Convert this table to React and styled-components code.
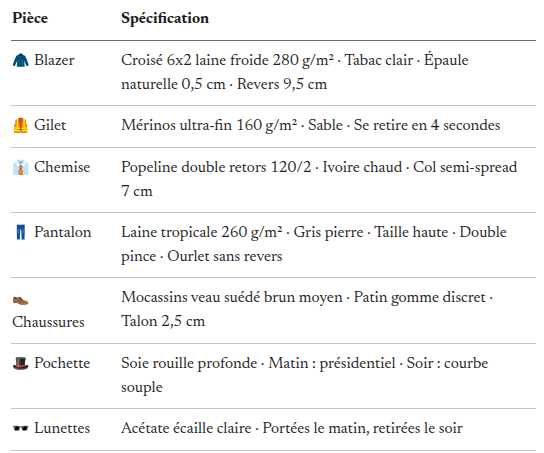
import React from "react";
import styled, { createGlobalStyle } from "styled-components";

const GlobalStyle = createGlobalStyle`
  html, body {
    margin: 0;
    background: #ffffff;
  }
`;

const items = [
  { icon: "🧥", name: "Blazer", spec: "Croisé 6x2 laine froide 280 g/m² · Tabac clair · Épaule naturelle 0,5 cm · Revers 9,5 cm" },
  { icon: "🦺", name: "Gilet", spec: "Mérinos ultra-fin 160 g/m² · Sable · Se retire en 4 secondes" },
  { icon: "👔", name: "Chemise", spec: "Popeline double retors 120/2 · Ivoire chaud · Col semi-spread 7 cm" },
  { icon: "👖", name: "Pantalon", spec: "Laine tropicale 260 g/m² · Gris pierre · Taille haute · Double pince · Ourlet sans revers" },
  { icon: "👞", name: "Chaussures", spec: "Mocassins veau suédé brun moyen · Patin gomme discret · Talon 2,5 cm" },
  { icon: "🎩", name: "Pochette", spec: "Soie rouille profonde · Matin : présidentiel · Soir : courbe souple" },
  { icon: "🕶️", name: "Lunettes", spec: "Acétate écaille claire · Portées le matin, retirées le soir" },
];

const Page = styled.div`
  padding: 8px 8px 0 11px;
`;

const Table = styled.table`
  width: 100%;
  border-collapse: collapse;
  table-layout: fixed;
  font-family: "Newsreader", "Liberation Serif", serif;
  font-size: 16px;
  line-height: 24px;
  color: #1c1c1c;
`;

const HeadCell = styled.th`
  text-align: left;
  font-weight: 700;
  font-size: 15.5px;
  padding: 0 ${(p) => (p.$first ? "20px" : "12px")} 8px 1px;
  border-bottom: 1px solid #6b6b6b;
  width: ${(p) => (p.$first ? "88px" : "auto")};
`;

const Row = styled.tr`
  border-bottom: 1px solid #c4c4c4;
`;

const Cell = styled.td`
  vertical-align: top;
  padding: 8px ${(p) => (p.$first ? "20px" : "12px")} 8px 1px;
`;

const Icon = styled.span`
  display: inline-block;
  width: 17px;
  margin-right: 5px;
  font-size: 14px;
  text-align: center;
`;

export default function App() {
  return (
    <Page>
      <GlobalStyle />
      <Table>
        <thead>
          <tr>
            <HeadCell $first>Pièce</HeadCell>
            <HeadCell>Spécification</HeadCell>
          </tr>
        </thead>
        <tbody>
          {items.map((item) => (
            <Row key={item.name}>
              <Cell $first>
                <Icon>{item.icon}</Icon>
                {item.name}
              </Cell>
              <Cell>{item.spec}</Cell>
            </Row>
          ))}
        </tbody>
      </Table>
    </Page>
  );
}
